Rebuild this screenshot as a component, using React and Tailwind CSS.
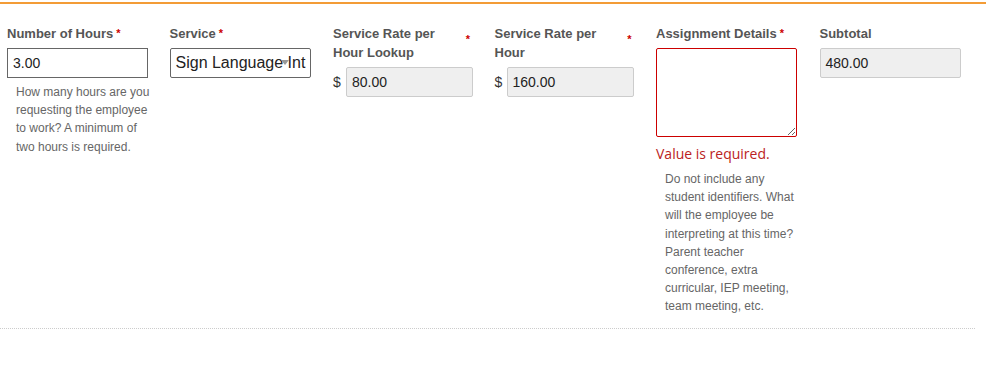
export default function App() {
  const label = "text-[13px] font-bold leading-[19px] text-[#555]"
  const help = "text-[12px] leading-[18.2px] text-[#666]"
  const star = <span className="ml-[3px] text-[11px] align-top text-[#c00]">*</span>

  return (
    <div className="w-[996px] h-[384px] bg-white font-['Liberation_Sans',Arial,sans-serif]">
      <div className="w-[986px] h-[2px] mt-[2px] bg-[#f39c36]"></div>
      <div className="w-[975px] grid grid-cols-6 pt-[20px] pb-[12px] border-b border-dotted border-[#ccc]">
        <div className="pl-[7px]">
          <div className={label}>Number of Hours{star}</div>
          <div className="mt-[5px] w-[141px] h-[30px] border border-[#666] px-[5px] flex items-center text-[14px] text-[#222]">3.00</div>
          <p className={`${help} mt-[5px] pl-[9px] w-[150px]`}>How many hours are you requesting the employee to work? A minimum of two hours is required.</p>
        </div>

        <div className="pl-[7px]">
          <div className={label}>Service{star}</div>
          <div className="relative mt-[5px] w-[141px] h-[30px] border border-[#666] rounded-[2px] pl-[5px] flex items-center text-[16px] text-[#222] overflow-hidden whitespace-nowrap">
            Sign Language Int
            <span className="absolute left-[110px] top-[11px] w-0 h-0 border-l-[4px] border-r-[4px] border-t-[5px] border-l-transparent border-r-transparent border-t-[#999]"></span>
          </div>
        </div>

        <div className="pl-[8px]">
          <div className={`${label} flex w-[137px] justify-between`}>
            <span className="w-[120px]">Service Rate per Hour Lookup</span>
            <span className="text-[#c00] text-[11px] mt-[6px]">*</span>
          </div>
          <div className="mt-[5px] flex items-center">
            <span className="text-[14px] text-[#333] w-[13px]">$</span>
            <div className="w-[127px] h-[30px] bg-[#efefef] border border-[#ccc] rounded-[2px] px-[5px] flex items-center text-[14px] text-[#222]">80.00</div>
          </div>
        </div>

        <div className="pl-[7px]">
          <div className={`${label} flex w-[137px] justify-between`}>
            <span className="w-[120px]">Service Rate per Hour</span>
            <span className="text-[#c00] text-[11px] mt-[6px]">*</span>
          </div>
          <div className="mt-[5px] flex items-center">
            <span className="text-[14px] text-[#333] w-[12px]">$</span>
            <div className="w-[127px] h-[30px] bg-[#efefef] border border-[#ccc] rounded-[2px] px-[5px] flex items-center text-[14px] text-[#222]">160.00</div>
          </div>
        </div>

        <div className="pl-[6px]">
          <div className={label}>Assignment Details{star}</div>
          <textarea readOnly className="block mt-[5px] w-[141px] h-[89px] border border-[#c00] rounded-[2px] outline-none"></textarea>
          <div className="mt-[7px] text-[14px] leading-[20px] text-[#b22] font-['Open_Sans',sans-serif]">Value is required.</div>
          <p className={`${help} mt-[6px] pl-[9px] w-[150px]`}>Do not include any student identifiers. What will the employee be interpreting at this time? Parent teacher conference, extra curricular, IEP meeting, team meeting, etc.</p>
        </div>

        <div className="pl-[7px]">
          <div className={label}>Subtotal</div>
          <div className="mt-[5px] w-[141px] h-[30px] bg-[#efefef] border border-[#ccc] rounded-[2px] px-[5px] flex items-center text-[14px] text-[#222]">480.00</div>
        </div>
      </div>
    </div>
  )
}
